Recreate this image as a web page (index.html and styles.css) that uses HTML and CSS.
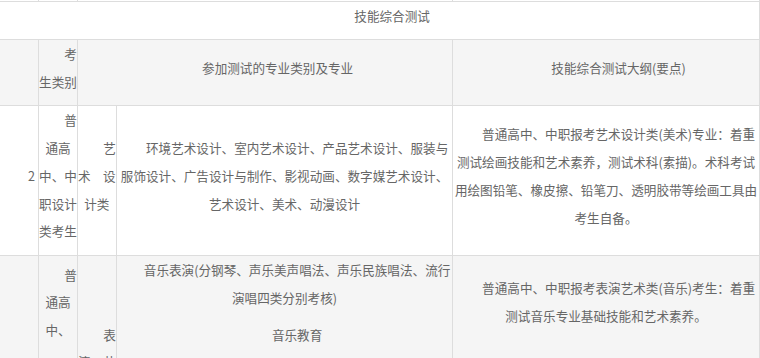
FILE: index.html
```html
<!DOCTYPE html>
<html lang="zh-CN">
<head>
<meta charset="utf-8">
<title>技能综合测试</title>
<link rel="stylesheet" href="styles.css">
</head>
<body>
<table class="grid">
  <colgroup>
    <col class="c-narrow">
    <col class="c-narrow">
    <col class="c-narrow">
    <col class="c-major">
    <col class="c-outline">
  </colgroup>
  <tbody>
    <tr class="cut">
      <td class="first"></td>
      <td></td>
      <td colspan="2"></td>
      <td></td>
    </tr>
    <tr class="plain">
      <td class="first" colspan="5"><p>技能综合测试</p></td>
    </tr>
    <tr class="shade">
      <td class="first"></td>
      <td><p>考生类别</p></td>
      <td colspan="2"><p>参加测试的专业类别及专业</p></td>
      <td><p>技能综合测试大纲(要点)</p></td>
    </tr>
    <tr class="plain">
      <td class="first"><p>2</p></td>
      <td><p>普通高中、中职设计类考生</p></td>
      <td class="type"><p>艺术设计类</p></td>
      <td><p>环境艺术设计、室内艺术设计、产品艺术设计、服装与服饰设计、广告设计与制作、影视动画、数字媒艺术设计、艺术设计、美术、动漫设计</p></td>
      <td><p>普通高中、中职报考艺术设计类(美术)专业：着重测试绘画技能和艺术素养，测试术科(素描)。术科考试用绘图铅笔、橡皮擦、铅笔刀、透明胶带等绘画工具由考生自备。</p></td>
    </tr>
    <tr class="shade">
      <td class="first" rowspan="2"></td>
      <td><p>普通高中、</p></td>
      <td class="type" rowspan="2"><p>表演艺术类</p></td>
      <td><p>音乐表演(分钢琴、声乐美声唱法、声乐民族唱法、流行演唱四类分别考核)</p><p>音乐教育</p></td>
      <td><p>普通高中、中职报考表演艺术类(音乐)考生：着重测试音乐专业基础技能和艺术素养。</p></td>
    </tr>
    <tr class="plain tail">
      <td><p>中职表演类考生</p></td>
      <td><p>舞蹈表演</p></td>
      <td><p>普通高中、中职报考表演艺术类(舞蹈)考生：着重测试舞蹈专业基础技能和艺术素养。</p></td>
    </tr>
  </tbody>
</table>
</body>
</html>
```

FILE: styles.css
```css
html, body {
  margin: 0;
  padding: 0;
  background: #ffffff;
}

body {
  font-family: "Noto Sans CJK SC", "Microsoft YaHei", sans-serif;
  font-size: 12.6px;
  color: #666666;
}

.grid {
  width: 760px;
  table-layout: fixed;
  border-collapse: separate;
  border-spacing: 0;
}

.c-narrow { width: 39px; }
.c-major { width: 336px; }
.c-outline { width: 307px; }

.grid td {
  box-sizing: border-box;
  padding: 0;
  border-right: 1px solid #dddddd;
  border-bottom: 1px solid #dddddd;
  vertical-align: middle;
  text-align: center;
  line-height: 27.75px;
}

.grid p {
  margin: 0 0 9.6px;
  text-indent: 2em;
}

.cut td {
  height: 2px;
}

.plain td { background: #ffffff; }
.shade td { background: #f5f5f5; }

.grid td.type {
  padding-right: 0.5px;
}

.type p {
  text-align: justify;
  text-align-last: center;
}

.tail td {
  height: 120px;
}
```
